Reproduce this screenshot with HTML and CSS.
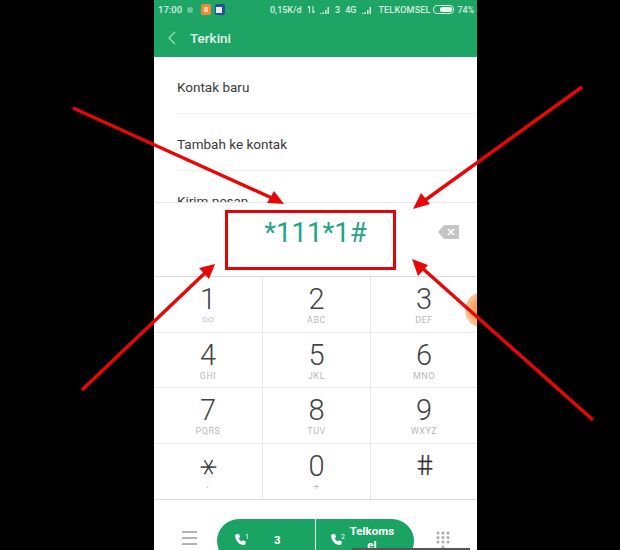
FILE: index.html
```html
<!DOCTYPE html>
<html lang="id">
<head>
<meta charset="utf-8">
<title>Dialer</title>
<link rel="stylesheet" href="styles.css">
</head>
<body>
<div class="phone">
  <header class="appbar">
    <div class="status">
      <span class="time">17:00</span>
      <span class="dot"></span>
      <span class="app app-orange"></span>
      <span class="app app-blue"></span>
      <span class="speed">0,15K/d</span>
      <svg class="updown" viewBox="0 0 9 9"><path d="M2.5 8V1M1 3l1.500-2M6 1v7M6 8l1.500-2" fill="none" stroke="#d5f0e2" stroke-width="1.1"/></svg>
      <svg class="signal" viewBox="0 0 11 8"><path d="M0 8h1.500V7H0zM2.500 8H4V6H2.500zM5 8h1.500V4H5zM7.500 8H9V1H7.500z" fill="#d5f0e2"/></svg>
      <span class="net3">3</span>
      <span class="net4g">4G</span>
      <svg class="signal signal-b" viewBox="0 0 11 8"><path d="M0 8h1.500V7H0zM2.500 8H4V6H2.500zM5 8h1.500V4H5zM7.500 8H9V1H7.500z" fill="#d5f0e2"/></svg>
      <span class="carrier">TELKOMSEL</span>
      <span class="battery"><span class="battery-fill"></span></span>
      <span class="percent">74%</span>
    </div>
    <div class="toolbar">
      <svg class="back" viewBox="0 0 8 14"><path d="M7 1 1 7l6 6" fill="none" stroke="#a6e0c3" stroke-width="1.2"/></svg>
      <span class="title">Terkini</span>
    </div>
  </header>

  <section class="list">
    <div class="item">Kontak baru</div>
    <div class="item">Tambah ke kontak</div>
    <div class="item">Kirim pesan</div>
  </section>

  <section class="display">
    <span class="number">*111*1#</span>
    <svg class="backspace" viewBox="0 0 21 14"><path d="M6 0h15v14H6L0 7z" fill="#c4c4c4"/><path d="M10 4l6 6M16 4l-6 6" stroke="#fff" stroke-width="1.6"/></svg>
  </section>

  <section class="keypad">
    <div class="key"><span class="digit">1</span><span class="sub sub-q">QO</span></div>
    <div class="key"><span class="digit">2</span><span class="sub">ABC</span></div>
    <div class="key"><span class="digit">3</span><span class="sub">DEF</span></div>
    <div class="key"><span class="digit">4</span><span class="sub">GHI</span></div>
    <div class="key"><span class="digit">5</span><span class="sub">JKL</span></div>
    <div class="key"><span class="digit">6</span><span class="sub">MNO</span></div>
    <div class="key"><span class="digit">7</span><span class="sub">PQRS</span></div>
    <div class="key"><span class="digit">8</span><span class="sub">TUV</span></div>
    <div class="key"><span class="digit">9</span><span class="sub">WXYZ</span></div>
    <div class="key"><span class="digit digit-star">∗</span><span class="sub sub-comma">,</span></div>
    <div class="key"><span class="digit">0</span><span class="sub">+</span></div>
    <div class="key"><span class="digit digit-hash">#</span><span class="sub"></span></div>
  </section>

  <footer class="actions">
    <svg class="menu" viewBox="0 0 15 14"><path d="M0 1h15M0 7h15M0 13h15" stroke="#9c9c9c" stroke-width="1.6"/></svg>
    <div class="pill">
      <div class="sim sim-one">
        <svg class="call" viewBox="0 0 14 14"><path d="M2.500.8 5.300.2l1.200 3.500-1.500 1.200c.6 1.700 1.600 2.800 3.200 3.700l1.300-1.400 3.300 1.500-.6 3c-.2.6-.8 1-1.400.9C5.300 12.200 1.800 8.400 1.200 2.200c-.1-.6.700-1.200 1.300-1.400z" fill="#fff"/></svg>
        <sup class="slot">1</sup>
        <span class="sim-name sim-name-one">3</span>
      </div>
      <div class="sim sim-two">
        <svg class="call" viewBox="0 0 14 14"><path d="M2.500.8 5.300.2l1.200 3.500-1.500 1.200c.6 1.700 1.600 2.800 3.200 3.700l1.300-1.400 3.300 1.500-.6 3c-.2.6-.8 1-1.400.9C5.300 12.200 1.800 8.400 1.200 2.200c-.1-.6.700-1.200 1.300-1.400z" fill="#fff"/></svg>
        <sup class="slot">2</sup>
        <span class="sim-name">Telkoms<br>el</span>
      </div>
    </div>
    <svg class="dots" viewBox="0 0 14 18"><g fill="#ababab"><circle cx="2" cy="2" r="1.500"/><circle cx="7" cy="2" r="1.500"/><circle cx="12" cy="2" r="1.500"/><circle cx="2" cy="6.500" r="1.500"/><circle cx="7" cy="6.500" r="1.500"/><circle cx="12" cy="6.500" r="1.500"/><circle cx="2" cy="11" r="1.500"/><circle cx="7" cy="11" r="1.500"/><circle cx="12" cy="11" r="1.500"/><circle cx="7" cy="16" r="1.500"/></g></svg>
  </footer>

  <span class="float-ball"></span>
  <span class="nav-strip"></span>
</div>

<div class="callout"></div>
<svg class="arrows" viewBox="0 0 620 550">
  <g stroke="#e60808" stroke-width="3.400" fill="none">
    <path d="M73 108 272 198"/>
    <path d="M582 87 424 201"/>
    <path d="M82 390 206 272"/>
    <path d="M593 420 421 267"/>
  </g>
  <g fill="#e60808">
    <path d="M284 204 267 203 274 191z"/>
    <path d="M413 209 421 193 430 204z"/>
    <path d="M215 264 209 279 199 268z"/>
    <path d="M412 259 428 265 418 276z"/>
  </g>
</svg>
</body>
</html>
```
FILE: styles.css
```css
* { box-sizing: border-box; }
html, body { margin: 0; height: 550px; overflow: hidden; background: #000; }
body { position: relative; padding-left: 154px; font-family: Roboto, "Liberation Sans", sans-serif; }

.phone { position: relative; width: 323px; height: 550px; background: #fff; overflow: hidden; }

.appbar { height: 57px; background: #1ea566; }
.status { display: flex; align-items: center; height: 19px; padding-left: 4px; color: #d5f0e2; font-size: 9px; font-weight: 500; white-space: nowrap; }
.time { font-size: 9.500px; width: 27px; }
.dot { width: 6px; height: 6px; border-radius: 50%; background: #6cc4a0; margin-left: 2px; }
.app { position: relative; width: 10px; height: 11px; border-radius: 2px; }
.app::after { content: ""; position: absolute; left: 3px; top: 3px; width: 4px; height: 5px; }
.app-orange { background: #ee8a3c; margin-left: 8px; }
.app-orange::after { background: #f8c9a0; }
.app-blue { background: #26508f; margin-left: 4px; }
.app-blue::after { left: 1px; width: 6px; height: 6px; background: #e4ebf5; }
.speed { margin-left: 45px; width: 33px; }
.updown { width: 9px; height: 9px; margin-left: 4px; }
.signal { width: 11px; height: 8px; margin-left: 4px; }
.net3 { margin-left: 4px; }
.net4g { margin-left: 5px; }
.signal-b { margin-left: 6px; }
.carrier { margin-left: 5px; width: 51px; letter-spacing: .2px; }
.battery { display: flex; align-items: center; width: 21px; height: 9px; margin-left: 4px; padding: 1px; border: 1px solid #d5f0e2; border-radius: 4px; }
.battery-fill { display: block; width: 74%; height: 100%; margin-left: auto; background: #e4f6ec; border-radius: 2px; }
.percent { margin-left: 3px; }

.toolbar { display: flex; align-items: center; height: 38px; }
.back { width: 8px; height: 14px; margin-left: 14px; }
.title { margin-left: 14px; font-size: 13.500px; font-weight: 500; color: #e4f7ec; }

.list { height: 145px; overflow: hidden; }
.item { display: flex; align-items: center; height: 57px; margin-left: 23px; padding-top: 4px; font-size: 13.500px; color: #3a3a3a; border-bottom: 1px solid #f2f2f2; }

.display { position: relative; display: flex; justify-content: center; height: 74px; border-top: 1px solid #e8e8e8; }
.number { position: relative; height: 34px; margin-top: 13px; font-size: 27.500px; line-height: 34px; color: #1fa585; }
.backspace { position: absolute; left: 284px; top: 22px; width: 21px; height: 14px; }

.keypad { display: grid; grid-template-columns: 108px 108px 107px; grid-auto-rows: 55.500px; border-top: 1px solid #dcdcdc; border-bottom: 1px solid #dcdcdc; }
.key { display: flex; flex-direction: column; align-items: center; border-left: 1px solid #e8e8e8; border-bottom: 1px solid #ececec; }
.key:nth-child(3n+1) { border-left: 0; }
.key:nth-last-child(-n+3) { border-bottom: 0; }
.digit { height: 33px; margin-top: 4px; font-size: 29px; font-weight: 300; line-height: 36px; color: #444; }
.digit-star { font-family: "DejaVu Sans", sans-serif; font-size: 33px; color: #333; -webkit-text-stroke: .5px #333; transform: rotate(90deg); transform-origin: 50% 19px; }
.digit-hash { font-size: 28px; font-weight: 300; color: #333; -webkit-text-stroke: .2px #333; transform: skewX(9deg); }
.sub { font-size: 9px; line-height: 12px; letter-spacing: .5px; color: #b8b8b8; }
.sub-q { font-size: 8px; }
.sub-comma { margin-top: -3px; }

.actions { position: relative; display: flex; align-items: flex-start; padding-top: 19px; height: 52px; }
.menu { width: 15px; height: 14px; margin: 12px 0 0 28px; }
.pill { display: flex; width: 197px; height: 44px; margin-left: 20px; border-radius: 22px; overflow: hidden; background: #1aa463; color: #fff; font-weight: 700; font-size: 11.500px; }
.sim { position: relative; display: flex; align-items: flex-start; height: 100%; }
.sim-one { width: 99px; border-right: 1px solid #e8f6ee; padding-left: 17px; padding-top: 14px; }
.sim-two { flex: 1; padding-left: 14px; padding-top: 14px; }
.call { width: 13px; height: 14px; flex: none; }
.slot { font-size: 7px; font-weight: 400; line-height: 8px; margin-left: -2px; }
.sim-name-one { margin-left: 25px; line-height: 14px; }
.sim-two .sim-name { margin: -9px 0 0 3px; width: 48px; text-align: center; line-height: 14px; }
.dots { width: 14px; height: 18px; margin: 12px 0 0 22px; }

.float-ball { position: absolute; left: 311px; top: 292px; width: 36px; height: 36px; border-radius: 50%; background: radial-gradient(circle, #f5a25e 0 40%, #fbdcc2 85%); }
.nav-strip { position: absolute; left: 198px; top: 548px; width: 118px; height: 2px; background: #555; }

.callout { position: absolute; left: 225px; top: 210px; width: 171px; height: 60px; border: 3px solid #e00606; }
.arrows { position: absolute; left: 0; top: 0; width: 620px; height: 550px; }
```
